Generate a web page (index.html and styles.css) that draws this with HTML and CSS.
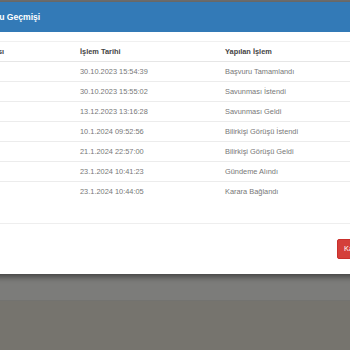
FILE: index.html
```html
<!DOCTYPE html>
<html lang="tr">
<head>
<meta charset="utf-8">
<link rel="stylesheet" href="styles.css">
</head>
<body>
<div class="top-strip"></div>
<div class="modal">
  <div class="modal-header">Başvuru Geçmişi</div>
  <div class="modal-body">
    <table class="history">
      <thead>
        <tr><th class="c1">Sırası</th><th class="c2">İşlem Tarihi</th><th class="c3">Yapılan İşlem</th></tr>
      </thead>
      <tbody>
        <tr><td class="c1">1</td><td class="c2">30.10.2023 15:54:39</td><td class="c3">Başvuru Tamamlandı</td></tr>
        <tr><td class="c1">2</td><td class="c2">30.10.2023 15:55:02</td><td class="c3">Savunması İstendi</td></tr>
        <tr><td class="c1">3</td><td class="c2">13.12.2023 13:16:28</td><td class="c3">Savunması Geldi</td></tr>
        <tr><td class="c1">4</td><td class="c2">10.1.2024 09:52:56</td><td class="c3">Bilirkişi Görüşü İstendi</td></tr>
        <tr><td class="c1">5</td><td class="c2">21.1.2024 22:57:00</td><td class="c3">Bilirkişi Görüşü Geldi</td></tr>
        <tr><td class="c1">6</td><td class="c2">23.1.2024 10:41:23</td><td class="c3">Gündeme Alındı</td></tr>
        <tr><td class="c1">7</td><td class="c2">23.1.2024 10:44:05</td><td class="c3">Karara Bağlandı</td></tr>
      </tbody>
    </table>
  </div>
  <div class="modal-footer"><button class="btn-close">Kapat</button></div>
</div>
<div class="band"></div>
</body>
</html>
```
FILE: styles.css
```css
html, body {
  margin: 0;
  padding: 0;
  height: 100%;
  background: #76746e;
  font-family: "Liberation Sans", Arial, sans-serif;
  overflow: hidden;
}
.top-strip {
  height: 2px;
  background: #6f6f6f;
}
.modal {
  position: relative;
  z-index: 2;
  margin-left: -70px;
  width: 460px;
  background: #fff;
  box-shadow: 0 3px 6px rgba(0,0,0,0.45);
}
.modal-header {
  height: 30px;
  line-height: 30px;
  background: #337ab7;
  color: #fff;
  font-weight: bold;
  font-size: 8.6px;
  padding-left: 40px;
  box-sizing: border-box;
}
.modal-body {
  padding: 9px 0 21px 0;
  border-bottom: 1px solid #eeeeee;
}
.history {
  border-collapse: collapse;
  width: 100%;
  font-size: 7.4px;
}
.history th, .history td {
  height: 20px;
  padding: 0;
  text-align: left;
  vertical-align: middle;
  box-sizing: border-box;
}
.history th {
  color: #444;
  font-weight: bold;
  border-top: 1px solid #f0f0f0;
  border-bottom: 1px solid #e6e6e6;
}
.history td {
  color: #777;
  border-bottom: 1px solid #ececec;
}
.history tbody tr:last-child td {
  border-bottom: none;
}
.c1 { width: 150px; padding-left: 54px !important; }
.c2 { width: 145px; }
.modal-footer {
  height: 50px;
  display: flex;
  align-items: center;
  padding-left: 407px;
}
.btn-close {
  height: 20px;
  padding: 0 6px;
  background: #d43f3a;
  border: 1px solid #c9302c;
  border-radius: 2px;
  color: #fff;
  font-family: "Liberation Sans", Arial, sans-serif;
  font-size: 7.4px;
}
.band {
  height: 26px;
  background: #7c7c7a;
  border-bottom: 1px solid #737370;
}
```
